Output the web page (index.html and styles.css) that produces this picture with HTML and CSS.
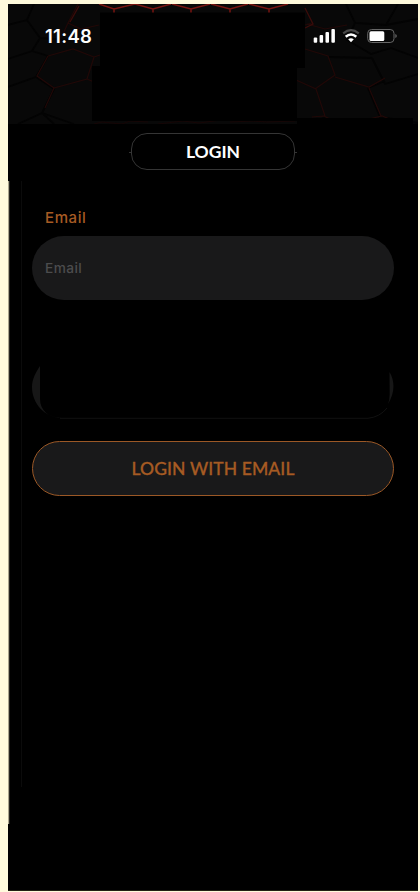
FILE: index.html
```html
<!DOCTYPE html>
<html lang="en">
<head>
<meta charset="utf-8">
<title>Login</title>
<link rel="stylesheet" href="styles.css">
</head>
<body>
<main class="phone">
  <header class="hero">
    <svg class="hexagons" width="410" height="120" viewBox="8 4 410 120" fill="none" aria-hidden="true">
      <g stroke="#030303" stroke-width="1.8">
        <path d="M8 25l19-5 7-16M27 20l13 18-8 13-24 8M40 38l28 2M8 87l28-10 18 12M36 77l12-21-16-5M54 89l-12 24 12 11M42 113l-24 11M42 113l32 11"/>
        <path d="M346 4l9 19 31 2 12-21M386 25l32-6M355 23l-8 17 24 14 20-6M391 48l27 10M372 58l13 26 33-10M368 88l14 34M368 88l17-7M329 57l43 1M325 117l-12 7M380 117l38 6"/>
      </g>
      <g stroke="#210807" stroke-width="1.2">
        <path d="M78 4l-10 19 13 6 18-4M68 23l-5 11M48 56l25-7 21 8-7 22-33 9M48 56l-11 20 17 12-9 20M94 57l6-2M87 79l7 3M305 25l7-2M307 24l18 5 22-4M305 49l23 7 7 19-20 14M296 80l20 9 9 27M335 77l34 10 16-9M369 88l12 28M312 117l12-1 8 4M369 119l13-3 10 4"/>
      </g>
      <g stroke="#781410" stroke-width="1.5">
        <path d="M99 4l15 5 21-5M114 9v4M135 4l18 5 18-5M153 9v4M172 4l19 5 19-5M191 9v4M211 4l19 5 18-5M230 9v4M249 4l20 5 19-5M269 9v4"/>
      </g>
      <path d="M79 6l-9 16M305 8l8 16-8 4" stroke="#3c0c0a" stroke-width="1.3"/>
      <path d="M94 124l8-2 20 2 8-3 18 1M158 124l25-3 16 2 22-3M230 122l23-1 14 1 28-1" stroke="#160505"/>
      <path d="M100 12.500H305V68H297V121H92V66H100Z" fill="#000"/>
      <path d="M297 118H413V124H297Z" fill="#000"/>
    </svg>
    <div class="status">
      <span class="time">11:48</span>
      <svg class="signals" width="84" height="16" viewBox="313 28 84 16" aria-hidden="true">
        <g fill="#fff">
          <rect x="313.700" y="37.500" width="3.500" height="5.200" rx="1"/>
          <rect x="319.600" y="35" width="3.500" height="7.700" rx="1"/>
          <rect x="325.500" y="32" width="3.500" height="10.700" rx="1"/>
          <rect x="331.400" y="29" width="3.500" height="13.700" rx="1"/>
        </g>
        <g fill="none" stroke-width="2.200">
          <path d="M343.200 33.300Q351 27.100 358.800 33.300" stroke="#484848"/>
          <path d="M345.700 36.700Q351 32.300 356.300 36.700" stroke="#fff" stroke-width="2.500"/>
        </g>
        <path d="M348.200 39.200Q351 37.100 353.800 39.200L351 42.300Z" fill="#fff"/>
        <rect x="367.700" y="29.500" width="26.300" height="13" rx="3.800" fill="none" stroke="#666"/>
        <rect x="369.500" y="31.200" width="14.800" height="9.700" rx="1.500" fill="#fff"/>
        <path d="M395.300 34q1.500.5 1.500 2t-1.500 2z" fill="#666"/>
      </svg>
    </div>
  </header>
  <section class="panel">
    <h1 class="tab"><span>LOGIN</span></h1>
    <form class="form">
      <label class="label" for="email">Email</label>
      <input class="field" id="email" type="text" placeholder="Email">
      <div class="covered">
        <svg width="362" height="54" viewBox="32 365 362 54" aria-hidden="true">
          <path d="M40 366C36 372 32 379 32 387C32 403 44 418 63 418C48 418 40 410 40 399ZM389.500 372C395 381 395 393 388 404Q389.700 400 389.700 394Z" fill="#171717"/>
          <path d="M60 418.300H368Q380 417 387 408" fill="none" stroke="#111"/>
        </svg>
      </div>
      <button class="submit" type="button"><span>LOGIN WITH EMAIL</span></button>
    </form>
  </section>
</main>
</body>
</html>
```
FILE: styles.css
```css
* { box-sizing: border-box; }
body { margin: 0; height: 892px; padding: 4px 2px 2px 8px; background: #fffadc; overflow: hidden; }
.phone { position: relative; width: 410px; height: 887px; background: #000; border-bottom: 1px solid #222115; }
.phone::before { content: ""; position: absolute; left: 0; top: 177px; width: 2px; height: 643px; background: linear-gradient(90deg, #aaa58e 50%, #25241f 50%); }
.phone::after { content: ""; position: absolute; left: 13px; top: 177px; width: 1px; height: 606px; background: #0b0b0b; }
.hero { position: relative; height: 120px; background: #080808; overflow: hidden; }
.hexagons { position: absolute; inset: 0; }
.status { position: relative; display: flex; align-items: center; justify-content: space-between; height: 24px; margin-top: 20px; padding: 0 21px 0 37px; }
.time { font: 600 18.500px/24px Inter, sans-serif; letter-spacing: .3px; color: #fff; }
.signals { display: block; }
.panel { padding: 9px 24px 0; }
.tab { position: relative; display: flex; align-items: center; justify-content: center; width: 164px; height: 37px; margin: 0 auto 0 99px; border: 1px solid #353535; border-radius: 16px; font: 700 17.500px/22px Lato, sans-serif; color: #fff; }
.tab::before, .tab::after { content: ""; position: absolute; top: 18px; width: 2px; height: 1px; background: #333; }
.tab::before { left: -3px; }
.tab::after { right: -3px; }
.form { display: flex; flex-direction: column; }
.label { margin: 38px 0 8px 13px; font: 500 15px/20px Inter, sans-serif; letter-spacing: .6px; color: #a65b23; }
.field { width: 362px; height: 64px; margin: 0; padding: 0 13px; border: 0; border-radius: 32px; outline: 0; background: #19191a; font: 500 13.700px/20px Inter, sans-serif; letter-spacing: .4px; color: #555; }
.field::placeholder { color: #4c4c4d; opacity: 1; }
.covered { height: 54px; margin-top: 65px; }
.covered svg { display: block; }
.submit { width: 362px; height: 55px; margin-top: 22px; padding: 0; border: 1px solid #9b5826; border-radius: 28px; background: #19191a; font: 500 17.500px/22px Lato, sans-serif; letter-spacing: .1px; color: #a65b23; -webkit-text-stroke: .3px #a65b23; }
```
